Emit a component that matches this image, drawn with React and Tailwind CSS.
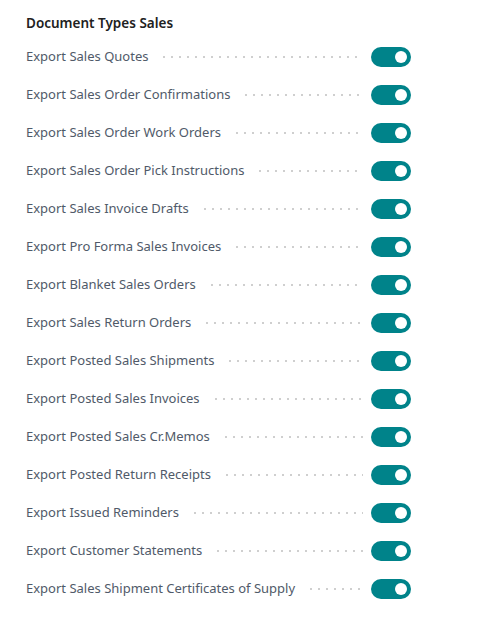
const rows = [
  "Export Sales Quotes",
  "Export Sales Order Confirmations",
  "Export Sales Order Work Orders",
  "Export Sales Order Pick Instructions",
  "Export Sales Invoice Drafts",
  "Export Pro Forma Sales Invoices",
  "Export Blanket Sales Orders",
  "Export Sales Return Orders",
  "Export Posted Sales Shipments",
  "Export Posted Sales Invoices",
  "Export Posted Sales Cr.Memos",
  "Export Posted Return Receipts",
  "Export Issued Reminders",
  "Export Customer Statements",
  "Export Sales Shipment Certificates of Supply",
];

function Toggle() {
  return (
    <button
      type="button"
      className="flex h-5 w-10 shrink-0 items-center justify-end rounded-full bg-[#00838a] pr-1"
    >
      <span className="h-3 w-3 rounded-full bg-white" />
    </button>
  );
}

export default function App() {
  return (
    <div className="min-h-[629px] bg-white pl-[26px] pt-[13px] font-['Noto_Sans',sans-serif]">
      <h2 className="h-5 text-[13.5px] font-semibold leading-5 text-[#212121]">Document Types Sales</h2>
      <div className="mt-[5px] w-[385px]">
        {rows.map((label) => (
          <div key={label} className="flex h-[38px] items-center">
            <span className="shrink-0 text-[13px] text-[#505a69]">{label}</span>
            <span className="ml-3 mr-2 h-1 flex-1 bg-[radial-gradient(circle,#cfcfcf_1px,transparent_1.3px)] bg-[length:8px_4px]" />
            <Toggle />
          </div>
        ))}
      </div>
    </div>
  );
}
